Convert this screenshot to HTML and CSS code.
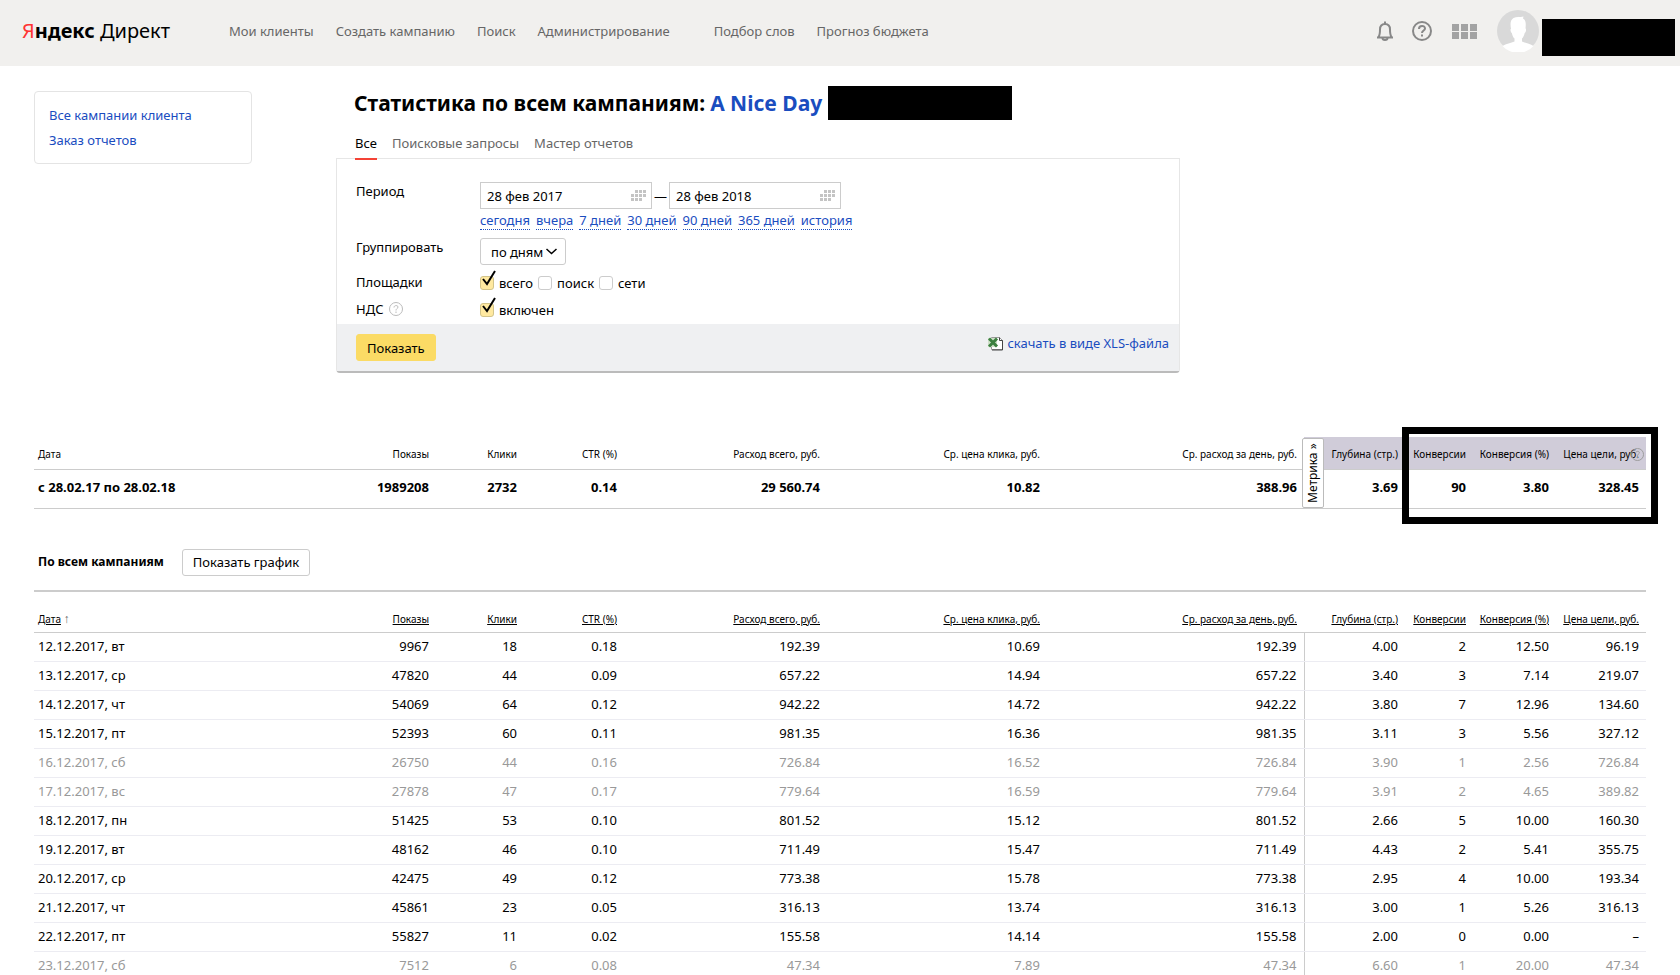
FILE: index.html
```html
<!DOCTYPE html>
<html lang="ru">

<head>
    <meta charset="utf-8">
    <title>Яндекс Директ</title>
    <link rel="stylesheet" href="styles.css">
</head>

<body>
    <header class="header">
        <a class="logo" href="#"><b><span class="logo-first">Я</span>ндекс</b> Директ</a>
        <nav class="nav">
            <a href="#">Мои клиенты</a>
            <a href="#">Создать кампанию</a>
            <a href="#">Поиск</a>
            <a href="#">Администрирование</a>
            <a class="nav-tool" href="#">Подбор слов</a>
            <a href="#">Прогноз бюджета</a>
        </nav>
        <div class="user">
            <button class="icon-button" aria-label="Уведомления">
                <svg width="18" height="20" viewBox="0 0 18 20" fill="none" stroke="#888" stroke-width="2">
                    <path d="M1 16.5h16M2.5 16c1.500-2 1.500-4 1.500-7.500C4 5 6 3 9 3s5 2 5 5.500c0 3.500 0 5.500 1.500 7.500" />
                    <path d="M9 3V0.500M6.500 17c0 2.500 5 2.500 5 0" />
                </svg>
            </button>
            <button class="icon-button" aria-label="Помощь">
                <svg width="20" height="20" viewBox="0 0 20 20" fill="none" stroke="#888" stroke-width="2">
                    <circle cx="10" cy="10" r="9" />
                    <path d="M7 8c0-4 6-4 6-0.500 0 2-3 2-3 4.500M10 13.500v2" />
                </svg>
            </button>
            <button class="icon-button apps" aria-label="Сервисы">
                <svg width="25" height="15" viewBox="0 0 25 15" fill="#a3a3a3">
                    <path d="M0 0h7v7H0zM9 0h7v7H9zM18 0h7v7h-7zM0 8h7v7H0zM9 8h7v7H9zM18 8h7v7h-7z" />
                </svg>
            </button>
            <svg class="avatar" width="42" height="42" viewBox="0 0 42 42">
                <circle cx="21" cy="21" r="21" fill="#d9d9d9" />
                <path fill="#fff" d="M14 19c-1-6-0.500-9 2.500-11 3-1.500 6-0.500 10-1.500l-0.500 2c3 1.500 3 5 2.500 10 1 0 0.500 4-0.800 4.500-0.700 3-1.700 4.500-2.700 5.500v3c3 1.500 8 2.200 11.500 4.500A21 21 0 0 1 5.500 36c3.500-2.300 8.500-3 12-4.500v-3c-1.200-1-2-2.500-2.700-5.500-1.300-0.500-1.800-4.500-0.800-4z" />
            </svg>
            <div class="user-name"></div>
        </div>
    </header>

    <div class="top">
        <aside class="side">
            <a href="#">Все кампании клиента</a>
            <a href="#">Заказ отчетов</a>
        </aside>

        <main class="content">
            <h1 class="title">Статистика по всем кампаниям: <a href="#">A Nice Day</a><span class="client-id"></span></h1>
            <nav class="tabs">
                <a class="tab active" href="#">Все</a>
                <a class="tab" href="#">Поисковые запросы</a>
                <a class="tab" href="#">Мастер отчетов</a>
            </nav>

            <form class="panel">
                <div class="fields">
                    <label class="name" for="date-from">Период</label>
                    <div>
                        <div class="period">
                            <div class="date">
                                <input type="text" id="date-from" value="28 фев 2017">
                                <svg width="15" height="12" viewBox="0 0 15 12" fill="#c4c4c4">
                                    <path d="M4 0h3v3H4zM8 0h3v3H8zM12 0h3v3h-3zM0 4h3v3H0zM4 4h3v3H4zM8 4h3v3H8zM12 4h3v3h-3zM0 8h3v3H0zM4 8h3v3H4zM8 8h3v3H8z" />
                                </svg>
                            </div>
                            <span>—</span>
                            <div class="date">
                                <input type="text" id="date-to" aria-label="Конец периода" value="28 фев 2018">
                                <svg width="15" height="12" viewBox="0 0 15 12" fill="#c4c4c4">
                                    <path d="M4 0h3v3H4zM8 0h3v3H8zM12 0h3v3h-3zM0 4h3v3H0zM4 4h3v3H4zM8 4h3v3H8zM12 4h3v3h-3zM0 8h3v3H0zM4 8h3v3H4zM8 8h3v3H8z" />
                                </svg>
                            </div>
                        </div>
                        <div class="presets">
                            <a href="#">сегодня</a>
                            <a href="#">вчера</a>
                            <a href="#">7 дней</a>
                            <a href="#">30 дней</a>
                            <a href="#">90 дней</a>
                            <a href="#">365 дней</a>
                            <a href="#">история</a>
                        </div>
                    </div>

                    <label class="name" for="group">Группировать</label>
                    <div class="select">
                        <select id="group">
                            <option>по дням</option>
                        </select>
                        <svg width="11" height="7" viewBox="0 0 11 7" fill="none" stroke="#000" stroke-width="1.500">
                            <path d="M0.500 1l5 4.500 5-4.500" />
                        </svg>
                    </div>

                    <span class="name">Площадки</span>
                    <div class="checks">
                        <label class="check"><input type="checkbox" checked><svg width="16" height="18" viewBox="0 0 16 18" fill="none" stroke="#000" stroke-width="2"><path d="M3 9l4 5 8-13" /></svg>всего</label>
                        <label class="check"><input type="checkbox">поиск</label>
                        <label class="check"><input type="checkbox">сети</label>
                    </div>

                    <span class="name">НДС
                        <svg class="hint" width="14" height="14" viewBox="0 0 14 14" fill="none" stroke="#bbb">
                            <circle cx="7" cy="7" r="6.500" />
                            <path d="M5 5.500c0-2.500 4-2.500 4-0.500 0 1.500-2 1.500-2 3.500M7 9.500v1.500" />
                        </svg>
                    </span>
                    <div class="checks">
                        <label class="check"><input type="checkbox" checked><svg width="16" height="18" viewBox="0 0 16 18" fill="none" stroke="#000" stroke-width="2"><path d="M3 9l4 5 8-13" /></svg>включен</label>
                    </div>
                </div>
                <div class="panel-footer">
                    <button class="button yellow" type="button">Показать</button>
                    <a class="xls" href="#">
                        <svg width="15" height="15" viewBox="0 0 15 15">
                            <path fill="#fff" stroke="#999" d="M3.500 1.500h8l3 3v9h-11z" />
                            <path fill="none" stroke="#444" d="M11.500 1.500v3h3v9.500H4" />
                            <path fill="#cfe0c9" d="M0 2h9v9H0z" />
                            <path stroke="#3c8040" stroke-width="3" d="M1 2.500l8 8M9 2.500l-8 8" />
                        </svg>
                        скачать в виде XLS-файла
                    </a>
                </div>
            </form>
        </main>
    </div>

    <section class="summary">
        <table class="stat total">
            <colgroup>
                <col><col class="c-shows"><col class="c-clicks"><col class="c-ctr"><col class="c-cost"><col class="c-click-price"><col class="c-day-cost"><col class="c-depth"><col class="c-conv"><col class="c-conv-rate"><col class="c-goal">
            </colgroup>
            <thead>
                <tr>
                    <th>Дата</th>
                    <th>Показы</th>
                    <th>Клики</th>
                    <th>CTR (%)</th>
                    <th>Расход всего, руб.</th>
                    <th>Ср. цена клика, руб.</th>
                    <th>Ср. расход за день, руб.</th>
                    <th class="metrika">Глубина (стр.)</th>
                    <th class="metrika">Конверсии</th>
                    <th class="metrika">Конверсия (%)</th>
                    <th class="metrika">Цена цели, руб.</th>
                </tr>
            </thead>
            <tbody>
                <tr>
                    <td>с 28.02.17 по 28.02.18</td>
                    <td>1989208</td>
                    <td>2732</td>
                    <td>0.14</td>
                    <td>29 560.74</td>
                    <td>10.82</td>
                    <td>388.96</td>
                    <td>3.69</td>
                    <td>90</td>
                    <td>3.80</td>
                    <td>328.45</td>
                </tr>
            </tbody>
        </table>
        <button class="metrika-toggle">Метрика »</button>
        <svg class="goal-hint" width="13" height="13" viewBox="0 0 14 14" fill="none" stroke="#999">
            <circle cx="7" cy="7" r="6.500" />
            <path d="M5 5.500c0-2.500 4-2.500 4-0.500 0 1.500-2 1.500-2 3.500M7 9.500v1.500" />
        </svg>
        <div class="frame"></div>
    </section>

    <section class="days">
        <div class="days-head">
            <h2>По всем кампаниям</h2>
            <button class="button">Показать график</button>
        </div>
        <table class="stat daily">
            <colgroup>
                <col><col class="c-shows"><col class="c-clicks"><col class="c-ctr"><col class="c-cost"><col class="c-click-price"><col class="c-day-cost"><col class="c-depth"><col class="c-conv"><col class="c-conv-rate"><col class="c-goal">
            </colgroup>
            <thead>
                <tr>
                    <th><a href="#">Дата</a> <span class="sort">↑</span></th>
                    <th><a href="#">Показы</a></th>
                    <th><a href="#">Клики</a></th>
                    <th><a href="#">CTR (%)</a></th>
                    <th><a href="#">Расход всего, руб.</a></th>
                    <th><a href="#">Ср. цена клика, руб.</a></th>
                    <th><a href="#">Ср. расход за день, руб.</a></th>
                    <th><a href="#">Глубина (стр.)</a></th>
                    <th><a href="#">Конверсии</a></th>
                    <th><a href="#">Конверсия (%)</a></th>
                    <th><a href="#">Цена цели, руб.</a></th>
                </tr>
            </thead>
            <tbody>
                <tr><td>12.12.2017, вт</td><td>9967</td><td>18</td><td>0.18</td><td>192.39</td><td>10.69</td><td>192.39</td><td>4.00</td><td>2</td><td>12.50</td><td>96.19</td></tr>
                <tr><td>13.12.2017, ср</td><td>47820</td><td>44</td><td>0.09</td><td>657.22</td><td>14.94</td><td>657.22</td><td>3.40</td><td>3</td><td>7.14</td><td>219.07</td></tr>
                <tr><td>14.12.2017, чт</td><td>54069</td><td>64</td><td>0.12</td><td>942.22</td><td>14.72</td><td>942.22</td><td>3.80</td><td>7</td><td>12.96</td><td>134.60</td></tr>
                <tr><td>15.12.2017, пт</td><td>52393</td><td>60</td><td>0.11</td><td>981.35</td><td>16.36</td><td>981.35</td><td>3.11</td><td>3</td><td>5.56</td><td>327.12</td></tr>
                <tr class="weekend"><td>16.12.2017, сб</td><td>26750</td><td>44</td><td>0.16</td><td>726.84</td><td>16.52</td><td>726.84</td><td>3.90</td><td>1</td><td>2.56</td><td>726.84</td></tr>
                <tr class="weekend"><td>17.12.2017, вс</td><td>27878</td><td>47</td><td>0.17</td><td>779.64</td><td>16.59</td><td>779.64</td><td>3.91</td><td>2</td><td>4.65</td><td>389.82</td></tr>
                <tr><td>18.12.2017, пн</td><td>51425</td><td>53</td><td>0.10</td><td>801.52</td><td>15.12</td><td>801.52</td><td>2.66</td><td>5</td><td>10.00</td><td>160.30</td></tr>
                <tr><td>19.12.2017, вт</td><td>48162</td><td>46</td><td>0.10</td><td>711.49</td><td>15.47</td><td>711.49</td><td>4.43</td><td>2</td><td>5.41</td><td>355.75</td></tr>
                <tr><td>20.12.2017, ср</td><td>42475</td><td>49</td><td>0.12</td><td>773.38</td><td>15.78</td><td>773.38</td><td>2.95</td><td>4</td><td>10.00</td><td>193.34</td></tr>
                <tr><td>21.12.2017, чт</td><td>45861</td><td>23</td><td>0.05</td><td>316.13</td><td>13.74</td><td>316.13</td><td>3.00</td><td>1</td><td>5.26</td><td>316.13</td></tr>
                <tr><td>22.12.2017, пт</td><td>55827</td><td>11</td><td>0.02</td><td>155.58</td><td>14.14</td><td>155.58</td><td>2.00</td><td>0</td><td>0.00</td><td>–</td></tr>
                <tr class="weekend"><td>23.12.2017, сб</td><td>7512</td><td>6</td><td>0.08</td><td>47.34</td><td>7.89</td><td>47.34</td><td>6.60</td><td>1</td><td>20.00</td><td>47.34</td></tr>
            </tbody>
        </table>
    </section>
</body>

</html>
```
FILE: styles.css
```css
* {
    box-sizing: border-box;
}

body {
    margin: 0;
    font: 13px/18px "Noto Sans", "Open Sans", sans-serif;
    color: #000;
    background: #fff;
    overflow: hidden;
}

a {
    color: #1a4dbf;
    text-decoration: none;
}

button,
input,
select {
    font: inherit;
    color: inherit;
}

/* header */
.header {
    display: flex;
    align-items: center;
    height: 66px;
    padding: 0 5px 4px 22px;
    background: #f1f0ee;
}

.logo {
    width: 207px;
    font-size: 20px;
    line-height: 32px;
    color: #000;
    white-space: nowrap;
}

.logo-first {
    color: #f33;
    font-weight: normal;
}

.nav {
    display: flex;
    gap: 22px;
    white-space: nowrap;
}

.nav a {
    color: #666;
}

.nav .nav-tool {
    margin-left: 22px;
}

.user {
    display: flex;
    align-items: center;
    margin-left: auto;
}

.icon-button {
    display: flex;
    margin-right: 18px;
    padding: 0;
    border: 0;
    background: none;
}

.apps {
    margin: 0 20px 0 2px;
}

.user-name {
    width: 133px;
    height: 37px;
    margin: 12px 0 0 3px;
    background: #000;
}

/* sidebar and form */
.top {
    display: flex;
    align-items: flex-start;
    gap: 84px;
    padding: 20px 34px 0;
}

.side {
    display: flex;
    flex-direction: column;
    gap: 7px;
    width: 218px;
    margin-top: 5px;
    padding: 14px;
    border: 1px solid #e4e4e4;
    border-radius: 4px;
}

.content {
    width: 844px;
}

.title {
    display: flex;
    align-items: center;
    height: 34px;
    margin: 0;
    padding-left: 18px;
    font-size: 21px;
    line-height: 34px;
    white-space: nowrap;
}

.title a {
    margin: 0 6px 0 5px;
}

.client-id {
    width: 184px;
    height: 34px;
    background: #000;
}

.tabs {
    display: flex;
    gap: 15px;
    padding-left: 19px;
}

.tab {
    padding: 14px 0 6px;
    color: #666;
}

.tab.active {
    margin-bottom: -2px;
    border-bottom: 2px solid #f44336;
    color: #000;
    z-index: 1;
}

.panel {
    border: 1px solid #e6e6e6;
    border-bottom: 2px solid #bbb;
    border-radius: 0 0 4px 4px;
}

.fields {
    display: grid;
    grid-template-columns: 124px 1fr;
    row-gap: 8px;
    padding: 23px 19px 5px;
}

.period {
    display: flex;
    align-items: center;
    gap: 2px;
}

.date {
    position: relative;
}

.date input {
    display: block;
    width: 172px;
    height: 27px;
    padding: 0 6px;
    border: 1px solid #ccc;
    background: #fff;
}

.date svg {
    position: absolute;
    right: 6px;
    top: 8px;
}

.presets {
    display: flex;
    gap: 6px;
    padding-top: 2px;
}

.presets a {
    border-bottom: 1px dotted #1a4dbf;
}

.select {
    position: relative;
    justify-self: start;
}

.select select {
    display: block;
    width: 86px;
    height: 27px;
    padding: 0 10px;
    border: 1px solid #ccc;
    border-radius: 3px;
    background: #fff;
    appearance: none;
}

.select svg {
    position: absolute;
    right: 9px;
    top: 10px;
}

.checks {
    display: flex;
    gap: 5px;
    height: 19px;
}

.check {
    position: relative;
    display: flex;
    align-items: center;
    gap: 5px;
}

.check input {
    width: 14px;
    height: 14px;
    margin: 0;
    border: 1px solid #ccc;
    border-radius: 3px;
    background: #fff;
    appearance: none;
}

.check input:checked {
    border-color: #d3c48a;
    background: #ffe9a0;
}

.check svg {
    position: absolute;
    left: 0;
    top: -3px;
}

.hint {
    margin-left: 2px;
    vertical-align: -2px;
}

.panel-footer {
    display: flex;
    align-items: flex-start;
    justify-content: space-between;
    height: 47px;
    padding: 10px 10px 0 19px;
    background: #eff0f2;
}

.button {
    height: 27px;
    padding: 0 10px;
    border: 1px solid #ccc;
    border-radius: 3px;
    background: #fff;
}

.button.yellow {
    border-color: #fbdb65;
    background: #fbdb65;
}

.xls {
    display: flex;
    align-items: center;
    gap: 4px;
}

/* statistics */
.summary {
    position: relative;
    margin: 64px 34px 0;
}

.stat {
    width: 100%;
    table-layout: fixed;
    border-collapse: collapse;
    white-space: nowrap;
}

.c-shows { width: 106px; }
.c-clicks { width: 88px; }
.c-ctr { width: 100px; }
.c-cost { width: 203px; }
.c-click-price { width: 220px; }
.c-day-cost { width: 257px; }
.c-depth { width: 101px; }
.c-conv { width: 68px; }
.c-conv-rate { width: 83px; }
.c-goal { width: 90px; }

.stat th,
.stat td {
    padding: 0 7px 0 0;
    text-align: right;
}

.stat th {
    height: 32px;
    border-bottom: 1px solid #ccc;
    font-size: 10px;
    font-weight: normal;
}

.stat th:first-child,
.stat td:first-child {
    padding-left: 4px;
    text-align: left;
}

.total th {
    padding-top: 3px;
}

.total td {
    height: 39px;
    padding-bottom: 4px;
    border-bottom: 1px solid #ccc;
    font-weight: bold;
}

.total .metrika {
    background: #d0ccd9;
}

.metrika-toggle {
    position: absolute;
    right: 322px;
    top: 1px;
    width: 22px;
    height: 70px;
    padding: 0;
    border: 1px solid #bbb;
    border-radius: 2px;
    background: #fff;
    font-size: 12px;
    writing-mode: vertical-rl;
    transform: rotate(180deg);
}

.goal-hint {
    position: absolute;
    right: 2px;
    top: 11px;
}

.frame {
    position: absolute;
    right: -12px;
    top: -10px;
    width: 256px;
    height: 97px;
    border: 7px solid #000;
}

.days {
    margin: 40px 34px 0;
}

.days-head {
    display: flex;
    align-items: center;
    gap: 18px;
    padding: 0 4px 14px;
    border-bottom: 2px solid #ccc;
}

.days-head h2 {
    margin: 0;
    font-size: 12px;
}

.daily th {
    height: 41px;
    padding-top: 14px;
}

.daily th a {
    color: #000;
    text-decoration: underline;
}

.daily .sort {
    color: #666;
    font-size: 12px;
    line-height: 12px;
}

.daily td {
    height: 29px;
    padding-bottom: 2px;
    border-bottom: 1px solid #ececf2;
}

.daily td:nth-child(7) {
    border-right: 1px solid #ccc;
}

.daily .weekend {
    color: #999;
}
```
